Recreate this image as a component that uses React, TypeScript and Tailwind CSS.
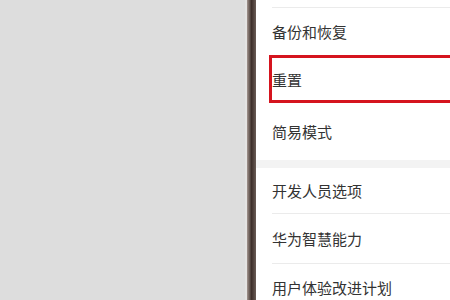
export default function App() {
  const font = { fontFamily: '"Noto Sans CJK SC", "Noto Sans", sans-serif' }

  return (
    <div className="flex h-[300px] w-[450px] overflow-hidden bg-[#dddddd]" style={font}>
      {/* 背景 */}
      <div className="w-[245px] shrink-0 bg-[#dddddd]" />
      <div className="w-[2px] shrink-0 bg-[#e4e3e2]" />
      {/* 手机边框 */}
      <div className="w-[9px] shrink-0 bg-gradient-to-r from-[#a39690] via-[#3e302b] to-[#6a5c56]" />

      {/* 设置列表 */}
      <div className="flex flex-1 flex-col bg-white text-[15px] leading-none text-[#333333]">
        <div className="h-[8px] shrink-0 ml-[16px] border-b border-[#ebebeb]" />
        <div className="flex h-[47px] shrink-0 items-center pl-[16px]">备份和恢复</div>
        <div className="h-[50px] shrink-0 pl-[13px]">
          <div className="flex h-[48px] items-center border-[3px] border-r-0 border-[#d5141e]">重置</div>
        </div>
        <div className="flex h-[55px] shrink-0 items-center pl-[16px] pb-[2px]">简易模式</div>
        <div className="h-[8px] shrink-0 bg-[#f3f3f3]" />
        <div className="ml-[16px] flex h-[46px] shrink-0 items-center border-b border-[#ebebeb]">开发人员选项</div>
        <div className="ml-[16px] flex h-[50px] shrink-0 items-center border-b border-[#ebebeb]">华为智慧能力</div>
        <div className="flex h-[46px] shrink-0 items-center pl-[16px]">用户体验改进计划</div>
      </div>
    </div>
  )
}
